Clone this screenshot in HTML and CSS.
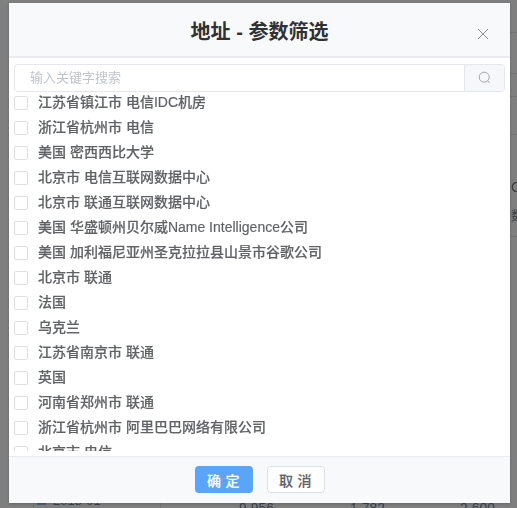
FILE: index.html
```html
<!DOCTYPE html>
<html lang="zh">
<head>
<meta charset="utf-8">
<title>地址 - 参数筛选</title>
<link rel="stylesheet" href="styles.css">
</head>
<body>
<div class="backdrop">
  <i class="hline hline-2"></i>
  <i class="hline hline-3"></i>
  <i class="hline hline-4"></i>
  <i class="hline hline-5"></i>
  <i class="hline hline-6"></i>
  <i class="vline vline-1"></i>
  <i class="vline vline-2"></i>
  <i class="vline vline-3"></i>
  <i class="vline vline-4"></i>
  <i class="vline vline-5"></i>
  <span class="bg-text bg-c">C</span>
  <span class="bg-text bg-shu">数</span>
  <span class="bg-box"></span>
  <span class="bg-text bg-date">2018-01</span>
  <span class="bg-text bg-a">9,956</span>
  <span class="bg-text bg-b">1,782</span>
  <span class="bg-text bg-d">2,600</span>
</div>
<div class="modal">
  <header class="modal-header">
    <h1 class="modal-title">地址 - 参数筛选</h1>
    <svg class="close" width="12" height="12" viewBox="0 0 12 12"><path d="M1 1l10 10M11 1L1 11" stroke="#8f9196" stroke-width="1" fill="none"/></svg>
  </header>
  <div class="modal-body">
    <div class="search">
      <div class="search-input">输入关键字搜索</div>
      <div class="search-btn">
        <svg width="14" height="14" viewBox="0 0 14 14"><circle cx="6.2" cy="6.2" r="5" stroke="#a3a6ad" stroke-width="1" fill="none"/><path d="M9.8 9.9l1.8 1.9" stroke="#a3a6ad" stroke-width="1" fill="none"/></svg>
      </div>
    </div>
    <div class="list-wrap">
      <ul class="list">
        <li class="row"><span class="check"></span><span class="label">江苏省镇江市 电信IDC机房</span></li>
        <li class="row"><span class="check"></span><span class="label">浙江省杭州市 电信</span></li>
        <li class="row"><span class="check"></span><span class="label">美国 密西西比大学</span></li>
        <li class="row"><span class="check"></span><span class="label">北京市 电信互联网数据中心</span></li>
        <li class="row"><span class="check"></span><span class="label">北京市 联通互联网数据中心</span></li>
        <li class="row"><span class="check"></span><span class="label">美国 华盛顿州贝尔威Name Intelligence公司</span></li>
        <li class="row"><span class="check"></span><span class="label">美国 加利福尼亚州圣克拉拉县山景市谷歌公司</span></li>
        <li class="row"><span class="check"></span><span class="label">北京市 联通</span></li>
        <li class="row"><span class="check"></span><span class="label">法国</span></li>
        <li class="row"><span class="check"></span><span class="label">乌克兰</span></li>
        <li class="row"><span class="check"></span><span class="label">江苏省南京市 联通</span></li>
        <li class="row"><span class="check"></span><span class="label">英国</span></li>
        <li class="row"><span class="check"></span><span class="label">河南省郑州市 联通</span></li>
        <li class="row"><span class="check"></span><span class="label">浙江省杭州市 阿里巴巴网络有限公司</span></li>
        <li class="row"><span class="check"></span><span class="label">北京市 电信</span></li>
      </ul>
    </div>
  </div>
  <footer class="modal-footer">
    <button class="btn btn-primary">确 定</button>
    <button class="btn btn-default">取 消</button>
  </footer>
</div>
</body>
</html>
```
FILE: styles.css
```css
* { box-sizing: border-box; }
html, body { margin: 0; height: 100%; overflow: hidden; }
body {
  font-family: "Liberation Sans", "Noto Sans CJK SC", sans-serif;
  background: #7f7f7f;
}
.backdrop { position: fixed; inset: 0; background: #7f7f7f; }
.hline { position: absolute; left: 510px; right: 0; height: 1px; background: #747576; }
.hline-2 { top: 32px; }
.hline-3 { top: 73px; }
.hline-4 { top: 96px; }
.hline-5 { top: 134px; }
.hline-6 { top: 236px; }
.vline { position: absolute; top: 500px; bottom: 0; width: 1px; background: #737476; }
.vline-1 { left: 33px; }
.vline-2 { left: 160px; }
.vline-3 { left: 271px; }
.vline-4 { left: 382px; }
.vline-5 { left: 492px; }
.bg-text { position: absolute; color: #3c4453; font-size: 14px; line-height: 16px; }
.bg-c { left: 511px; top: 179px; color: #3f4042; }
.bg-shu { left: 511px; top: 208px; font-size: 13px; color: #3f4042; }
.bg-box { position: absolute; left: 37px; top: 503px; width: 9px; height: 2px; background: #50607a; }
.bg-date { left: 53px; top: 493px; font-size: 13px; }
.bg-a { left: 239px; top: 500px; }
.bg-b { left: 350px; top: 500px; }
.bg-d { left: 460px; top: 500px; }
.modal {
  position: absolute;
  left: 9px;
  top: 3px;
  width: 501px;
  height: 500px;
  background: #fff;
  display: flex;
  flex-direction: column;
  box-shadow: 0 1px 3px rgba(0, 0, 0, .2);
}
.modal-header {
  position: relative;
  height: 55px;
  flex: none;
  background: #f8f9fb;
  border-bottom: 2px solid #ebedf0;
  display: flex;
  align-items: center;
  justify-content: center;
}
.modal-title {
  margin: 4px 0 0;
  font-size: 20px;
  line-height: 28px;
  font-weight: 700;
  color: #303133;
}
.close { position: absolute; right: 21px; top: 25px; }
.modal-body {
  flex: 1;
  min-height: 0;
  padding: 6px 5px 5px;
  display: flex;
  flex-direction: column;
}
.search {
  flex: none;
  height: 28px;
  display: flex;
  border: 1px solid #e4e7ed;
  border-radius: 4px;
}
.search-input {
  flex: 1;
  padding-left: 15px;
  font-size: 13px;
  line-height: 25px;
  color: #c0c4cc;
}
.search-btn {
  width: 40px;
  flex: none;
  background: #f5f7fa;
  border-left: 1px solid #e4e7ed;
  border-radius: 0 3px 3px 0;
  display: flex;
  align-items: center;
  justify-content: center;
}
.list-wrap { flex: 1; min-height: 0; overflow: hidden; }
.list { list-style: none; margin: -2px 0 0; padding: 0; }
.row {
  height: 25px;
  display: flex;
  align-items: center;
  gap: 10px;
  font-size: 14px;
  font-weight: 500;
  color: #606266;
  white-space: nowrap;
}
.label { margin-top: -4px; -webkit-text-stroke: .15px #606266; }
.check {
  width: 14px;
  height: 14px;
  flex: none;
  border: 1px solid #dcdfe6;
  border-radius: 2px;
  background: #fff;
}
.modal-footer {
  height: 47px;
  flex: none;
  background: #f8f9fb;
  border-top: 1px solid #ebedf0;
  display: flex;
  align-items: center;
  justify-content: center;
  gap: 14px;
  padding-bottom: 1px;
}
.btn {
  width: 58px;
  height: 27px;
  padding: 0;
  font-family: inherit;
  font-size: 14px;
  font-weight: 500;
  letter-spacing: .3px;
  border-radius: 4px;
  border: 1px solid transparent;
  -webkit-text-stroke: .15px currentColor;
}
.btn-primary { background: #5aa5f7; color: #fff; }
.btn-default { background: #fff; border-color: #dcdfe6; color: #606266; }
```
